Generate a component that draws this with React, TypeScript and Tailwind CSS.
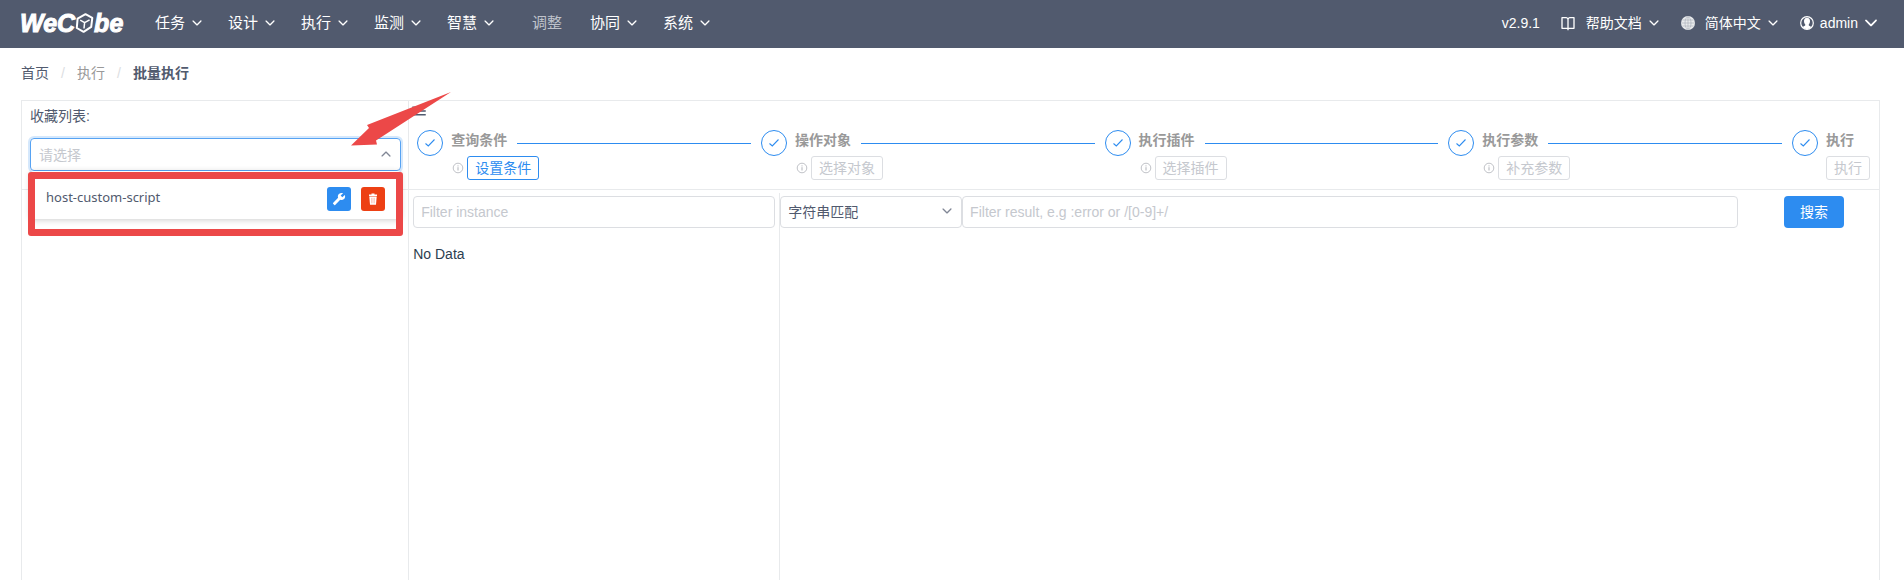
import React from "react";
import { IoIosArrowDown, IoIosArrowUp, IoMdBuild, IoMdMenu } from "react-icons/io";
import { RiBookOpenLine } from "react-icons/ri";

const menus = ["任务", "设计", "执行", "监测", "智慧", "调整", "协同", "系统"];

const steps = [
  { title: "查询条件", action: "设置条件", active: true },
  { title: "操作对象", action: "选择对象" },
  { title: "执行插件", action: "选择插件" },
  { title: "执行参数", action: "补充参数" },
  { title: "执行", action: "执行" },
];

function Chevron({ className = "size-3.5" }: { className?: string }) {
  return <IoIosArrowDown className={className} />;
}

function Logo() {
  return (
    <a
      href="#home"
      aria-label="WeCube"
      className="flex h-6 w-[106px] items-center text-[25px] leading-6 font-bold text-white italic"
    >
      <span className="[-webkit-text-stroke:1px_white]">WeC</span>
      <svg viewBox="0 0 19 20" className="h-5 w-[19px] shrink-0" fill="none" stroke="white" strokeWidth="2" strokeLinejoin="round">
        <path d="M10.5 1.2 17.3 4.8 16.2 13.8 8.6 18.8 1.8 15 2.6 5.6Z" />
        <path d="M5.2 7.2 9.6 9.6 14.6 6.8M9.6 9.6 9 15.5" strokeWidth="1.5" />
      </svg>
      <span className="[-webkit-text-stroke:1px_white]">be</span>
    </a>
  );
}

function GlobeIcon() {
  return (
    <svg viewBox="0 0 14 14" className="size-3.5">
      <circle cx="7" cy="7" r="7" fill="#e8eaec" />
      <g fill="none" stroke="#a5abb7" strokeWidth="0.6">
        <ellipse cx="7" cy="7" rx="3" ry="6.2" />
        <path d="M7 .5v13M1.5 4h11M.5 7h13M1.5 10h11" />
      </g>
    </svg>
  );
}

function UserIcon() {
  return (
    <svg viewBox="0 0 14 14" className="size-3.5">
      <circle cx="7" cy="7" r="6.3" fill="none" stroke="white" strokeWidth="1.2" />
      <path
        d="M7 1.8c2 0 3 1.4 3 3.2 0 1.6-.5 2.6-1.2 3.3v1.1l2.6 1.5A6.3 6.3 0 0 1 7 13.2a6.3 6.3 0 0 1-4.4-2.3l2.6-1.5V8.3C4.5 7.6 4 6.600 4 5c0-1.800 1-3.200 3-3.200Z"
        fill="white"
      />
    </svg>
  );
}

function InfoIcon() {
  return (
    <svg viewBox="0 0 12 12" className="mr-[3px] size-3 text-[#b0b3b9]" fill="none" stroke="currentColor">
      <circle cx="6" cy="6" r="4.8" strokeWidth="0.8" />
      <path d="M6 5.2v3.3M6 3.4v1" />
    </svg>
  );
}

function CheckIcon() {
  return (
    <svg viewBox="0 0 12 12" className="size-3" fill="none" stroke="currentColor" strokeWidth="1.1">
      <path d="M1.5 6.5 4.3 9 10.5 2.5" />
    </svg>
  );
}

function TrashIcon() {
  return (
    <svg viewBox="0 0 12 12" className="size-3" fill="white">
      <path d="M2 1.5h2.5V.5h3v1H10V3H2Z" />
      <path d="M2.3 3.4h7.4L9 11.8H3Z" />
      <path d="M4.600 4.800v5.500M6 4.800v5.500M7.400 4.800v5.500" stroke="#f49a85" strokeWidth="0.5" />
    </svg>
  );
}

function Header() {
  return (
    <header className="flex h-12 items-center justify-between bg-[#515a6e] pr-6 pb-0.5 pl-5 text-white">
      <div className="flex items-center">
        <Logo />
        <nav className="ml-[29px] flex items-center text-[15px] leading-6">
          {menus.map((m) =>
            m === "调整" ? (
              <button key={m} className="mr-7 ml-3 text-[#bfc3cb]">
                {m}
              </button>
            ) : (
              <button key={m} className="mr-6 flex items-center gap-[5px]">
                {m}
                <Chevron />
              </button>
            ),
          )}
        </nav>
      </div>
      <div className="flex items-center text-sm">
        <span className="mr-[21px]">v2.9.1</span>
        <button className="mr-5 flex items-center">
          <RiBookOpenLine className="mr-2.5 -ml-px size-4" />
          帮助文档
          <Chevron className="ml-[5px] size-3.5" />
        </button>
        <button className="mr-5 flex items-center">
          <GlobeIcon />
          <span className="ml-2.5">简体中文</span>
          <Chevron className="ml-[5px] size-3.5" />
        </button>
        <button className="flex items-center">
          <UserIcon />
          <span className="ml-1.5">admin</span>
          <Chevron className="ml-1 size-[18px]" />
        </button>
      </div>
    </header>
  );
}

function Favorites() {
  return (
    <div className="relative pr-[7px] pl-2">
      <label htmlFor="favorites" className="block pt-[3px] text-sm leading-6 text-[#515a6e]">
        收藏列表:
      </label>
      <div className="relative mt-2.5">
        <input
          id="favorites"
          placeholder="请选择"
          className="block h-[33px] w-full rounded border border-[#57a3f3] px-2 text-sm shadow-[0_0_0_2px_rgba(45,140,240,0.2)] outline-none placeholder:text-[#c5c8ce]"
        />
        <IoIosArrowUp className="absolute top-[9px] right-2 size-3.5 text-[#808695]" />
        <div className="absolute top-full right-0 left-0 z-10 flex h-12 items-center justify-between rounded bg-white px-4 pt-1.5 shadow-[0_1px_6px_rgba(0,0,0,0.2)]">
          <span className="font-['Noto_Sans'] text-[13px] text-[#515a6e]">host-custom-script</span>
          <span className="flex gap-2.5 pt-0.5">
            <button aria-label="编辑" className="flex size-6 items-center justify-center rounded-[3px] bg-[#2d8cf0] text-white">
              <IoMdBuild className="size-3.5 -scale-x-100" />
            </button>
            <button aria-label="删除" className="flex size-6 items-center justify-center rounded-[3px] bg-[#ed4014] text-white">
              <TrashIcon />
            </button>
          </span>
        </div>
        <div className="pointer-events-none absolute top-[34px] -right-0.5 -left-0.5 z-20 h-16 rounded-[3px] border-[7px] border-[#ec4848]" />
        <svg viewBox="0 0 100 54" className="pointer-events-none absolute -top-[46px] -right-[50px] z-20 h-[54px] w-[100px]">
          <path d="M100 0 16 33 18 36 0 53.5 26 52.5 25 48.5Z" fill="#ec4848" />
        </svg>
      </div>
    </div>
  );
}

function Steps() {
  return (
    <ol className="flex pr-[9px] pl-2">
      {steps.map((s, i) => {
        const last = i === steps.length - 1;
        return (
          <li key={s.title} className={last ? "flex" : "flex flex-1"}>
            <span className="flex size-[26px] shrink-0 items-center justify-center rounded-full border border-[#2d8cf0] text-[#2d8cf0]">
              <CheckIcon />
            </span>
            <div className="ml-2 min-w-0 flex-1">
              <div className="flex items-start">
                <span className="text-sm leading-5 font-bold text-[#999]">{s.title}</span>
                {!last && <span className="mx-2.5 mt-[13px] h-px flex-1 bg-[#2d8cf0]" />}
              </div>
              <div className="mt-1.5 flex items-center">
                {!last && (
                  <span className="pl-px">
                    <InfoIcon />
                  </span>
                )}
                <button
                  disabled={!s.active}
                  className={
                    s.active
                      ? "h-6 rounded-[3px] border border-[#2d8cf0] px-[7px] text-sm leading-5 text-[#2d8cf0]"
                      : "h-6 rounded-[3px] border border-[#dcdee2] px-[7px] text-sm leading-5 text-[#c5c8ce]"
                  }
                >
                  {s.action}
                </button>
              </div>
            </div>
          </li>
        );
      })}
    </ol>
  );
}

function Results() {
  const field =
    "h-8 w-full rounded border border-[#dcdee2] bg-white px-[7px] text-sm outline-none placeholder:text-[#c5c8ce]";
  return (
    <div className="grid flex-1 grid-cols-[371fr_1099fr] pt-[3px]">
      <section className="border-r border-[#e8eaec] pt-[3px] pr-1 pl-1">
        <input aria-label="Filter instance" placeholder="Filter instance" className={field} />
        <p className="mt-4 text-sm leading-5 text-[#2c3e50]">No Data</p>
      </section>
      <section className="grid grid-cols-[182fr_776fr_141fr] content-start pt-[3px]">
        <div className="relative">
          <select aria-label="匹配方式" className={field + " appearance-none text-[#515a6e]"}>
            <option>字符串匹配</option>
          </select>
          <IoIosArrowDown className="pointer-events-none absolute top-2 right-2 size-3.5 text-[#808695]" />
        </div>
        <input aria-label="Filter result" placeholder="Filter result, e.g :error or /[0-9]+/" className={field} />
        <button className="mr-[35px] h-8 w-[60px] justify-self-end rounded bg-[#2d8cf0] text-sm text-white">搜索</button>
      </section>
    </div>
  );
}

export default function App() {
  return (
    <div className="flex h-screen flex-col overflow-hidden bg-white font-['Liberation_Sans','Noto_Sans_CJK_SC',sans-serif] text-[#515a6e]">
      <Header />
      <nav aria-label="面包屑" className="flex h-[52px] shrink-0 items-center pb-0.5 pl-[21px] text-sm">
        <a href="#home">首页</a>
        <span className="w-7 text-center text-[#dcdee2]">/</span>
        <a href="#run" className="text-[#999]">
          执行
        </a>
        <span className="w-7 text-center text-[#dcdee2]">/</span>
        <strong>批量执行</strong>
      </nav>
      <main className="mr-6 ml-[21px] grid flex-1 grid-cols-[386fr_1470fr] grid-rows-[89px_1fr] border border-b-0 border-[#e8eaec]">
        <div className="border-b border-[#e8eaec]">
          <Favorites />
        </div>
        <div className="border-b border-l border-[#e8eaec]">
          <button aria-label="菜单" className="block pt-px pl-px">
            <IoMdMenu className="size-[18px]" />
          </button>
          <div className="mt-2.5">
            <Steps />
          </div>
        </div>
        <div />
        <div className="flex border-l border-[#e8eaec]">
          <Results />
        </div>
      </main>
    </div>
  );
}
